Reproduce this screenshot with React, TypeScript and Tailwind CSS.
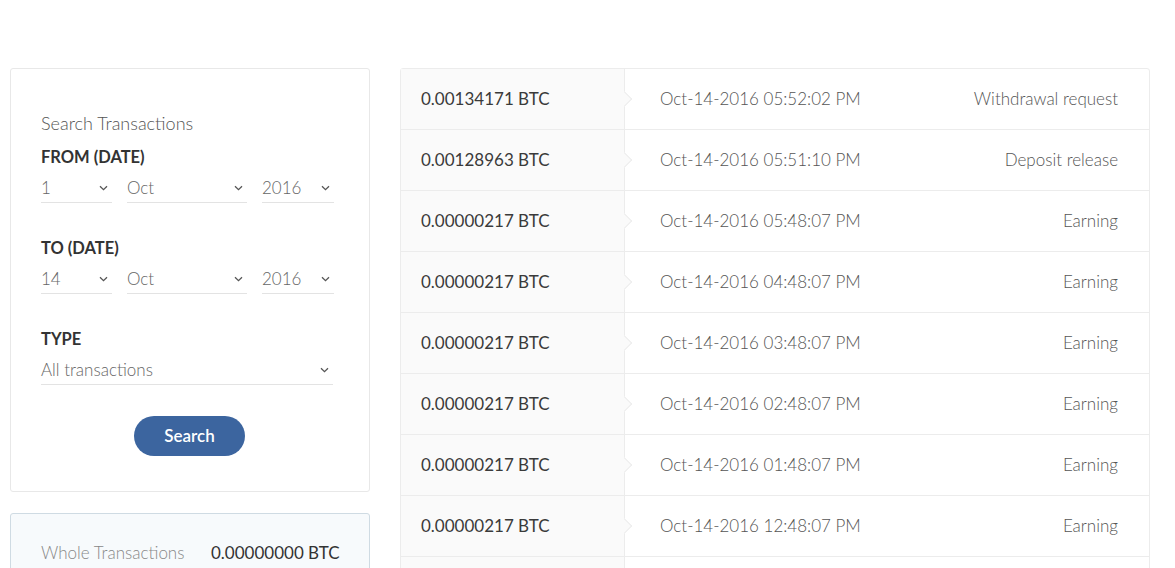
import React from "react";

const Chevron = () => (
  <svg width="9" height="6" viewBox="0 0 9 6" className="shrink-0">
    <path d="M1 1.2 L4.5 4.6 L8 1.2" fill="none" stroke="#555" strokeWidth="1.3" />
  </svg>
);

const Select = ({ value, w }: { value: string; w: string }) => (
  <div className={`${w} h-[30px] flex items-center justify-between border-b border-[#e3e3e3] pr-[4px] text-[17px] font-light text-[#666]`}>
    <span>{value}</span>
    <Chevron />
  </div>
);

const rows = [
  ["0.00134171 BTC", "Oct-14-2016 05:52:02 PM", "Withdrawal request"],
  ["0.00128963 BTC", "Oct-14-2016 05:51:10 PM", "Deposit release"],
  ["0.00000217 BTC", "Oct-14-2016 05:48:07 PM", "Earning"],
  ["0.00000217 BTC", "Oct-14-2016 04:48:07 PM", "Earning"],
  ["0.00000217 BTC", "Oct-14-2016 03:48:07 PM", "Earning"],
  ["0.00000217 BTC", "Oct-14-2016 02:48:07 PM", "Earning"],
  ["0.00000217 BTC", "Oct-14-2016 01:48:07 PM", "Earning"],
  ["0.00000217 BTC", "Oct-14-2016 12:48:07 PM", "Earning"],
  ["", "", ""],
];

export default function App() {
  return (
    <div
      className="w-[1175px] h-[568px] overflow-hidden bg-white flex gap-[30px] pt-[68px] pl-[10px]"
      style={{ fontFamily: "Lato, 'Open Sans', sans-serif" }}
    >
      <div className="w-[360px] shrink-0 flex flex-col">
        <div className="border border-[#e8e8e8] rounded-[3px] pl-[30px] pt-[42px] pb-[35px] flex flex-col">
          <div className="text-[18px] leading-[24px] font-light text-[#555]">Search Transactions</div>
          <div className="mt-[11px] text-[16.5px] leading-[22px] font-bold text-[#333]">FROM (DATE)</div>
          <div className="mt-[5px] flex gap-[15px]">
            <Select value="1" w="w-[71px]" />
            <Select value="Oct" w="w-[120px]" />
            <Select value="2016" w="w-[72px]" />
          </div>
          <div className="mt-[34px] text-[16.5px] leading-[22px] font-bold text-[#333]">TO (DATE)</div>
          <div className="mt-[5px] flex gap-[15px]">
            <Select value="14" w="w-[71px]" />
            <Select value="Oct" w="w-[120px]" />
            <Select value="2016" w="w-[72px]" />
          </div>
          <div className="mt-[34px] text-[16.5px] leading-[22px] font-bold text-[#333]">TYPE</div>
          <div className="mt-[5px] flex">
            <Select value="All transactions" w="w-[292px]" />
          </div>
          <div className="mt-[31px] w-[297px] flex justify-center">
            <button className="w-[111px] h-[40px] rounded-full bg-[#3c659f] text-white text-[17px] font-semibold">
              Search
            </button>
          </div>
        </div>
        <div className="mt-[21px] border border-[#cfdbe3] rounded-[3px] bg-[#f7fafc] pl-[30px] pt-[26px] pb-[20px] flex items-center">
          <span className="w-[170px] text-[17px] font-light text-[#888]">Whole Transactions</span>
          <span className="text-[17px] text-[#333]">0.00000000 BTC</span>
        </div>
      </div>

      <div className="w-[750px] shrink-0 border border-[#ececec] rounded-[3px] self-start">
        {rows.map((r, i) => (
          <div key={i} className={i > 0 ? "flex h-[61px] border-t border-[#ececec]" : "flex h-[60px]"}>
            <div className="relative w-[224px] shrink-0 bg-[#fafafa] border-r border-[#ececec] pl-[20px] flex items-center text-[17px] text-[#3a3a3a]">
              {r[0]}
              <div className="absolute right-[-6px] top-1/2 -translate-y-1/2 w-[11px] h-[11px] rotate-45 bg-[#fafafa] border-t border-r border-[#ececec] z-10" />
            </div>
            <div className="flex-1 flex items-center justify-between pl-[35px] pr-[31px] text-[17px] font-light text-[#555]">
              <span>{r[1]}</span>
              <span>{r[2]}</span>
            </div>
          </div>
        ))}
      </div>
    </div>
  );
}
